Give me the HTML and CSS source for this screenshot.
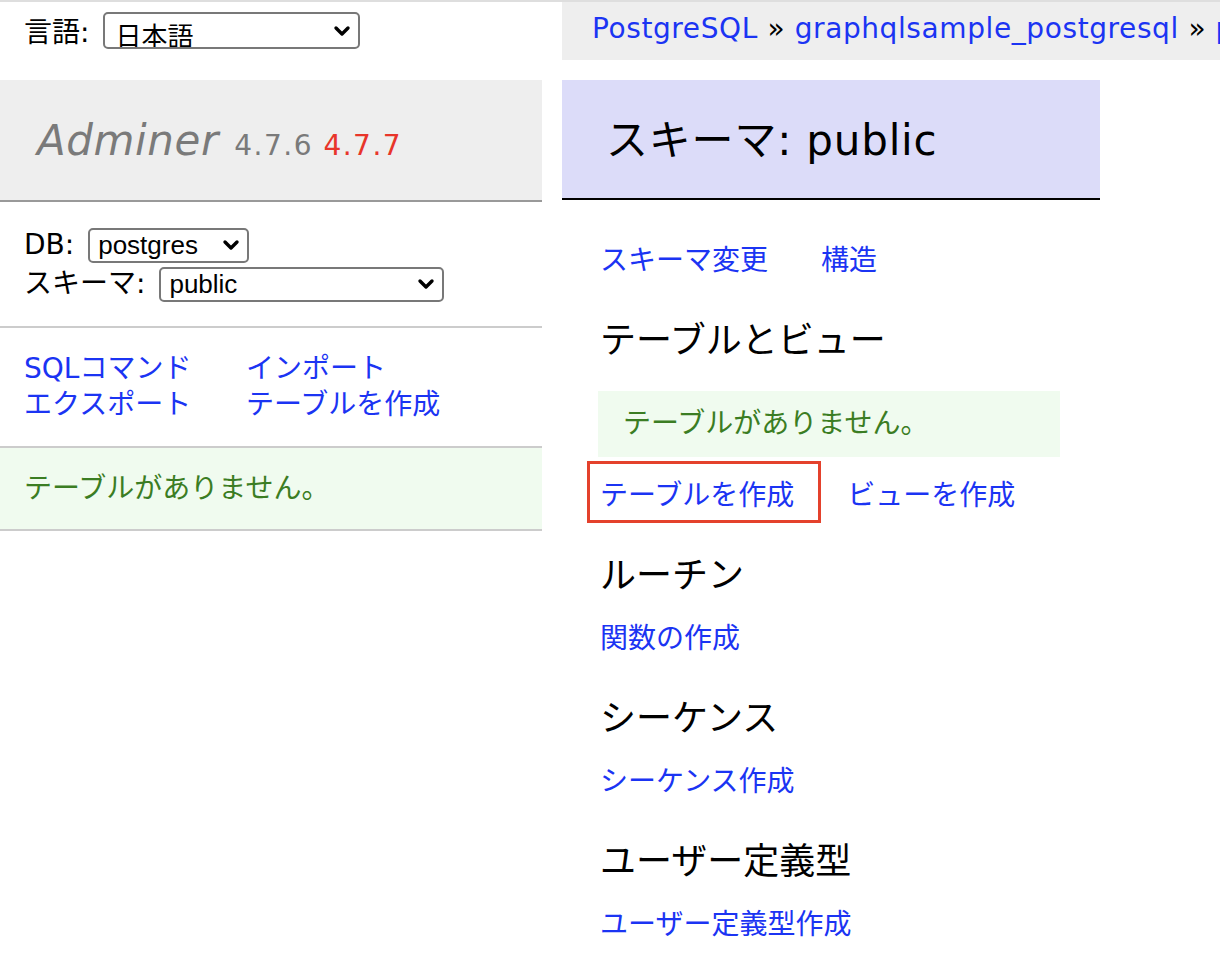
FILE: index.html
```html
<!DOCTYPE html>
<html lang="ja">
<head>
  <meta charset="UTF-8" />
  <title>スキーマ: public - Adminer</title>
  <link rel="stylesheet" href="styles.css">
</head>
<body>

  <div class="page">

    <!-- メニュー -->
    <div id="menu">
      <form class="lang">
        <span class="label">言語:</span>
        <span class="select select-lang">
          <select><option>日本語</option></select>
          <svg viewBox="0 0 18 12" width="18" height="12"><path d="M3 3 L9 9 L15 3" /></svg>
        </span>
      </form>

      <h1>
        <a href="#" class="logo">Adminer</a>
        <span class="version">4.7.6</span>
        <span class="version new">4.7.7</span>
      </h1>

      <form class="dbs">
        <div class="row">
          <span class="label">DB:</span>
          <span class="select select-db">
            <select><option>postgres</option></select>
            <svg viewBox="0 0 18 12" width="18" height="12"><path d="M3 3 L9 9 L15 3" /></svg>
          </span>
        </div>
        <div class="row">
          <span class="label">スキーマ:</span>
          <span class="select select-ns">
            <select><option>public</option></select>
            <svg viewBox="0 0 18 12" width="18" height="12"><path d="M3 3 L9 9 L15 3" /></svg>
          </span>
        </div>
      </form>

      <p class="menu-links">
        <a href="#">SQLコマンド</a>
        <a href="#">インポート</a>
        <a href="#">エクスポート</a>
        <a href="#">テーブルを作成</a>
      </p>

      <p class="menu-message">テーブルがありません。</p>
    </div>

    <!-- コンテンツ -->
    <div id="content">
      <p id="breadcrumb">
        <a href="#">PostgreSQL</a> &raquo; <a href="#">graphqlsample_postgresql</a> &raquo; <a href="#">public</a>
      </p>

      <h2>スキーマ: public</h2>

      <p class="links">
        <a href="#">スキーマ変更</a>
        <a href="#">構造</a>
      </p>

      <h3>テーブルとビュー</h3>
      <p class="message">テーブルがありません。</p>
      <p class="links after-message">
        <a href="#" class="marked">テーブルを作成</a>
        <a href="#">ビューを作成</a>
      </p>

      <h3>ルーチン</h3>
      <p class="links"><a href="#">関数の作成</a></p>

      <h3>シーケンス</h3>
      <p class="links"><a href="#">シーケンス作成</a></p>

      <h3>ユーザー定義型</h3>
      <p class="links"><a href="#">ユーザー定義型作成</a></p>
    </div>

  </div>

</body>
</html>
```

FILE: styles.css
```css
body {
  margin: 0;
  background: #fff;
  color: #000;
  font-family: "DejaVu Sans", "Noto Sans CJK JP", sans-serif;
  font-size: 28px;
  line-height: 36px;
  border-top: 2px solid #dedede;
  overflow: hidden;
}

a {
  color: #1b34f3;
  text-decoration: none;
}

.page {
  display: flex;
  gap: 20px;
}

/* メニュー */
#menu {
  width: 542px;
  flex: none;
}

.lang {
  display: flex;
  align-items: flex-start;
  gap: 14px;
  height: 78px;
  box-sizing: border-box;
  padding: 10px 0 0 24px;
  margin: 0;
}

.lang .label {
  margin-top: 3px;
}

.select {
  display: inline-flex;
  align-items: center;
  height: 35px;
  box-sizing: border-box;
  border: 2px solid #787878;
  border-radius: 5px;
  background: #fff;
}

.select select {
  appearance: none;
  -webkit-appearance: none;
  border: 0;
  outline: none;
  background: transparent;
  flex: 1;
  min-width: 0;
  height: 100%;
  padding: 0 0 0 8px;
  font-family: "Liberation Sans", "Noto Sans CJK JP", sans-serif;
  font-size: 26px;
  color: #000;
}

.select svg {
  flex: none;
  margin-right: 7px;
}

.select svg path {
  fill: none;
  stroke: #000;
  stroke-width: 3.4;
  stroke-linecap: round;
  stroke-linejoin: round;
}

.select-lang {
  width: 257px;
  height: 37px;
}

.select-lang select {
  padding-top: 8px;
  padding-left: 10px;
}

.select-db { width: 161px; }
.select-ns { width: 285px; }

h1 {
  margin: 0;
  height: 120px;
  padding-left: 37px;
  background: #eee;
  border-bottom: 2px solid #999;
  font-size: 42px;
  line-height: 122px;
  font-weight: normal;
  white-space: nowrap;
}

h1 .logo {
  color: #7a7a7a;
  font-style: italic;
  letter-spacing: 0.6px;
}

.version {
  color: #7a7a7a;
  font-size: 28px;
  letter-spacing: 1.5px;
  margin-left: 2px;
}

.version.new {
  color: #e8352a;
  margin-left: -3px;
}

.dbs {
  margin: 0;
  padding: 25px 0 24px 24px;
  border-bottom: 2px solid #ccc;
  display: flex;
  flex-direction: column;
  gap: 3px;
}

.dbs .row {
  display: flex;
  align-items: center;
  gap: 14px;
}

.menu-links {
  margin: 0;
  padding: 23px 0 23px 24px;
  border-bottom: 2px solid #ccc;
  display: grid;
  grid-template-columns: 222px auto;
}

.menu-message {
  margin: 0;
  padding: 23px 0 22px 24px;
  background: #f0fbef;
  color: #3b7d23;
  border-bottom: 2px solid #ccc;
}

/* コンテンツ */
#content {
  flex: 1;
  min-width: 0;
}

#breadcrumb {
  margin: 0;
  height: 58px;
  padding-left: 30px;
  background: #eee;
  line-height: 54px;
  letter-spacing: 0.6px;
  white-space: nowrap;
  overflow: hidden;
}

h2 {
  margin: 20px 0 43px;
  width: 538px;
  height: 120px;
  box-sizing: border-box;
  padding-left: 44px;
  background: #dcdcf9;
  border-bottom: 2px solid #000;
  font-size: 42px;
  line-height: 122px;
  letter-spacing: 0.8px;
  font-weight: normal;
}

#content h3,
#content p.links,
#content p.message {
  margin-left: 38px;
}

h3 {
  margin: 39px 0 0;
  font-size: 36px;
  line-height: 46px;
  font-weight: normal;
}

.links {
  margin: 22px 0 0;
  display: flex;
  gap: 53px;
}

#content h2 + .links {
  margin-top: 0;
}

.links a {
  display: inline-block;
  white-space: nowrap;
}

#content p.message {
  margin: 27px 0 0 36px;
  width: 462px;
  box-sizing: border-box;
  padding: 15px 25px;
  background: #f0fbef;
  color: #3b7d23;
}

.after-message {
  margin-top: 21px;
}

/* 注目の枠 */
.marked {
  position: relative;
}

.marked::after {
  content: "";
  position: absolute;
  left: -13px;
  right: -27px;
  top: -17px;
  bottom: -9px;
  border: 3px solid #e4412c;
}
```
